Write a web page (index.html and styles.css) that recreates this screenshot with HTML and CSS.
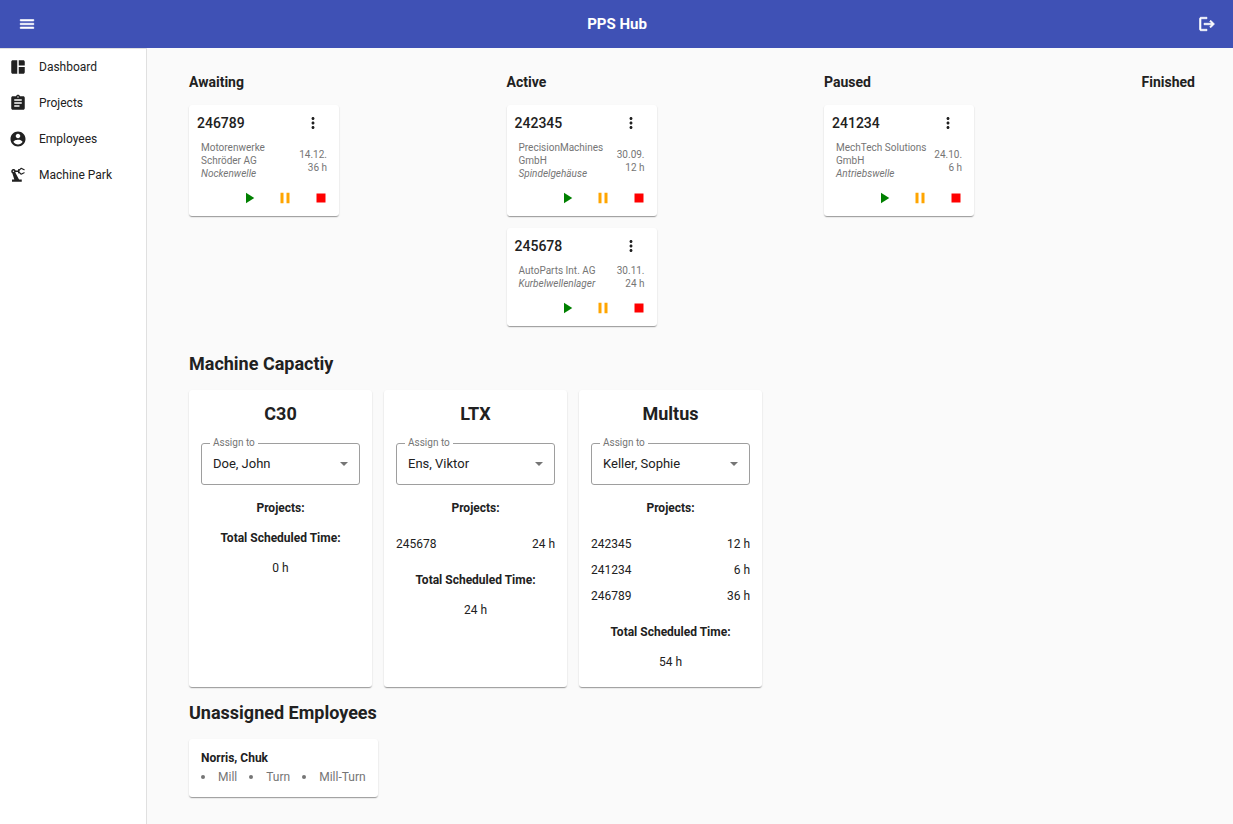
FILE: index.html
```html
<!DOCTYPE html>
<html lang="en">
<head>
<meta charset="utf-8">
<meta name="viewport" content="width=device-width, initial-scale=1">
<title>PPS Hub</title>
<link rel="stylesheet" href="styles.css">
</head>
<body>
<svg class="sprite" aria-hidden="true">
  <symbol id="more" viewBox="0 0 24 24"><path d="M12 8c1.100 0 2-.9 2-2s-.9-2-2-2-2 .9-2 2 .9 2 2 2zm0 2c-1.100 0-2 .9-2 2s.9 2 2 2 2-.9 2-2-.9-2-2-2zm0 6c-1.100 0-2 .9-2 2s.9 2 2 2 2-.9 2-2-.9-2-2-2z"/></symbol>
  <symbol id="play" viewBox="0 0 24 24"><path d="M8 5v14l11-7z"/></symbol>
  <symbol id="pause" viewBox="0 0 24 24"><path d="M6 19h4V5H6v14zm8-14v14h4V5h-4z"/></symbol>
  <symbol id="stop" viewBox="0 0 24 24"><path d="M6 6h12v12H6z"/></symbol>
</svg>
<header class="toolbar">
  <button class="icon-button" aria-label="Toggle menu"><svg class="icon" viewBox="0 0 24 24"><path d="M3 18h18v-2H3v2zm0-5h18v-2H3v2zm0-7v2h18V6H3z"/></svg></button>
  <h1 class="brand">PPS Hub</h1>
  <button class="icon-button" aria-label="Log out"><svg class="icon" viewBox="0 0 24 24"><path d="M17 7l-1.410 1.410L18.170 11H8v2h10.170l-2.580 2.580L17 17l5-5zM4 5h8V3H4c-1.100 0-2 .9-2 2v14c0 1.100.9 2 2 2h8v-2H4V5z"/></svg></button>
</header>
<div class="shell">
  <nav class="sidebar">
    <a class="nav-link" href="#dashboard"><svg class="icon" viewBox="0 0 24 24"><path d="M11 21H5c-1.100 0-2-.9-2-2V5c0-1.100.9-2 2-2h6v18zm2 0h6c1.100 0 2-.9 2-2v-7h-8v9zm8-11V5c0-1.100-.9-2-2-2h-6v7h8z"/></svg>Dashboard</a>
    <a class="nav-link" href="#projects"><svg class="icon" viewBox="0 0 24 24"><path d="M19 3h-4.180C14.400 1.840 13.300 1 12 1c-1.300 0-2.400.84-2.820 2H5c-1.100 0-2 .9-2 2v14c0 1.100.9 2 2 2h14c1.100 0 2-.9 2-2V5c0-1.100-.9-2-2-2zm-7 0c.55 0 1 .45 1 1s-.45 1-1 1-1-.45-1-1 .45-1 1-1zm2 14H7v-2h7v2zm3-4H7v-2h10v2zm0-4H7V7h10v2z"/></svg>Projects</a>
    <a class="nav-link" href="#employees"><svg class="icon" viewBox="0 0 24 24"><path d="M12 2C6.480 2 2 6.480 2 12s4.480 10 10 10 10-4.480 10-10S17.520 2 12 2zm0 3c1.660 0 3 1.340 3 3s-1.340 3-3 3-3-1.340-3-3 1.340-3 3-3zm0 14.200c-2.500 0-4.710-1.280-6-3.220.03-1.990 4-3.080 6-3.080 1.990 0 5.970 1.090 6 3.080-1.290 1.940-3.500 3.220-6 3.220z"/></svg>Employees</a>
    <a class="nav-link" href="#machines"><svg class="icon" viewBox="0 0 24 24"><path d="M19.930 8.350l-3.600 1.680L14 7.700V6.300l2.330-2.330 3.600 1.680c.38.18.82.01 1-.36.18-.38.01-.82-.36-1l-3.920-1.830c-.38-.18-.83-.1-1.130.2L13.780 4.300C13.600 4.120 13.320 4 13 4c-.55 0-1 .45-1 1v1H8.820C8.340 4.650 6.980 3.730 5.400 4.070c-1.160.25-2.150 1.250-2.360 2.430-.28 1.300.39 2.440 1.410 3.060L7.080 18H4v3h13v-3h-3.620L8.410 8.770c.17-.24.31-.49.41-.77H12v1c0 .55.45 1 1 1 .32 0 .6-.12.78-.3l1.650 1.650c.3.3.75.38 1.130.2l3.920-1.830c.38-.18.54-.62.36-1-.18-.37-.62-.54-1-.36zM6 8c-.55 0-1-.45-1-1s.45-1 1-1 1 .45 1 1-.45 1-1 1z"/></svg>Machine Park</a>
  </nav>
  <main class="content">
    <section class="board">
      <div class="lane">
        <h2 class="lane-title">Awaiting</h2>
        <article class="card job">
          <div class="job-head"><h3 class="job-id">246789</h3><button class="icon-button" aria-label="More"><svg class="icon"><use href="#more"/></svg></button></div>
          <div class="job-info"><div>Motorenwerke Schröder AG<br><em>Nockenwelle</em></div><div class="job-due">14.12.<br>36 h</div></div>
          <div class="job-actions"><button class="icon-button start" aria-label="Start"><svg class="icon"><use href="#play"/></svg></button><button class="icon-button hold" aria-label="Pause"><svg class="icon"><use href="#pause"/></svg></button><button class="icon-button halt" aria-label="Stop"><svg class="icon"><use href="#stop"/></svg></button></div>
        </article>
      </div>
      <div class="lane">
        <h2 class="lane-title">Active</h2>
        <article class="card job">
          <div class="job-head"><h3 class="job-id">242345</h3><button class="icon-button" aria-label="More"><svg class="icon"><use href="#more"/></svg></button></div>
          <div class="job-info"><div>PrecisionMachines GmbH<br><em>Spindelgehäuse</em></div><div class="job-due">30.09.<br>12 h</div></div>
          <div class="job-actions"><button class="icon-button start" aria-label="Start"><svg class="icon"><use href="#play"/></svg></button><button class="icon-button hold" aria-label="Pause"><svg class="icon"><use href="#pause"/></svg></button><button class="icon-button halt" aria-label="Stop"><svg class="icon"><use href="#stop"/></svg></button></div>
        </article>
        <article class="card job">
          <div class="job-head"><h3 class="job-id">245678</h3><button class="icon-button" aria-label="More"><svg class="icon"><use href="#more"/></svg></button></div>
          <div class="job-info"><div>AutoParts Int. AG<br><em>Kurbelwellenlager</em></div><div class="job-due">30.11.<br>24 h</div></div>
          <div class="job-actions"><button class="icon-button start" aria-label="Start"><svg class="icon"><use href="#play"/></svg></button><button class="icon-button hold" aria-label="Pause"><svg class="icon"><use href="#pause"/></svg></button><button class="icon-button halt" aria-label="Stop"><svg class="icon"><use href="#stop"/></svg></button></div>
        </article>
      </div>
      <div class="lane">
        <h2 class="lane-title">Paused</h2>
        <article class="card job">
          <div class="job-head"><h3 class="job-id">241234</h3><button class="icon-button" aria-label="More"><svg class="icon"><use href="#more"/></svg></button></div>
          <div class="job-info"><div>MechTech Solutions GmbH<br><em>Antriebswelle</em></div><div class="job-due">24.10.<br>6 h</div></div>
          <div class="job-actions"><button class="icon-button start" aria-label="Start"><svg class="icon"><use href="#play"/></svg></button><button class="icon-button hold" aria-label="Pause"><svg class="icon"><use href="#pause"/></svg></button><button class="icon-button halt" aria-label="Stop"><svg class="icon"><use href="#stop"/></svg></button></div>
        </article>
      </div>
      <div class="lane">
        <h2 class="lane-title">Finished</h2>
      </div>
    </section>
    <section>
      <h2 class="section-title">Machine Capactiy</h2>
      <div class="machines">
        <article class="card machine">
          <h3 class="machine-name">C30</h3>
          <div class="field"><label class="field-label" for="assign-c30">Assign to</label><select class="field-select" id="assign-c30"><option>Doe, John</option></select></div>
          <h4 class="caption">Projects:</h4>
          <h4 class="caption">Total Scheduled Time:</h4>
          <p class="total">0 h</p>
        </article>
        <article class="card machine">
          <h3 class="machine-name">LTX</h3>
          <div class="field"><label class="field-label" for="assign-ltx">Assign to</label><select class="field-select" id="assign-ltx"><option>Ens, Viktor</option></select></div>
          <h4 class="caption">Projects:</h4>
          <ul class="hours"><li><span>245678</span><span>24 h</span></li></ul>
          <h4 class="caption">Total Scheduled Time:</h4>
          <p class="total">24 h</p>
        </article>
        <article class="card machine">
          <h3 class="machine-name">Multus</h3>
          <div class="field"><label class="field-label" for="assign-multus">Assign to</label><select class="field-select" id="assign-multus"><option>Keller, Sophie</option></select></div>
          <h4 class="caption">Projects:</h4>
          <ul class="hours"><li><span>242345</span><span>12 h</span></li><li><span>241234</span><span>6 h</span></li><li><span>246789</span><span>36 h</span></li></ul>
          <h4 class="caption">Total Scheduled Time:</h4>
          <p class="total">54 h</p>
        </article>
      </div>
    </section>
    <section>
      <h2 class="section-title">Unassigned Employees</h2>
      <article class="card employee">
        <h3 class="employee-name">Norris, Chuk</h3>
        <ul class="skills"><li>Mill</li><li>Turn</li><li>Mill-Turn</li></ul>
      </article>
    </section>
  </main>
</div>
</body>
</html>
```
FILE: styles.css
```css
* {
  box-sizing: border-box;
}

body,
h1,
h2,
h3,
h4,
p,
ul {
  margin: 0;
  padding: 0;
}

body {
  display: flex;
  flex-direction: column;
  min-height: 100vh;
  background: #fafafa;
  color: #212121;
  font: 12px/18px Roboto, "Liberation Sans", sans-serif;
}

.sprite {
  display: none;
}

.icon {
  display: block;
  width: 18px;
  height: 18px;
  fill: currentColor;
}

.icon-button {
  display: flex;
  align-items: center;
  justify-content: center;
  width: 36px;
  height: 36px;
  padding: 0;
  border: 0;
  background: none;
  color: inherit;
  cursor: pointer;
}

.toolbar {
  display: flex;
  align-items: center;
  justify-content: space-between;
  height: 48px;
  padding: 0 8px 0 9px;
  background: #3f51b5;
  color: #fff;
}

.toolbar .icon {
  stroke: currentColor;
  stroke-width: 0.8;
}

.brand {
  font-size: 15px;
  font-weight: 700;
}

.shell {
  display: flex;
  flex: 1;
}

.sidebar {
  flex: none;
  width: 147px;
  border-top: 1px solid #e0e0e0;
  border-right: 1px solid #e0e0e0;
  background: #fff;
}

.nav-link {
  display: flex;
  align-items: center;
  gap: 12px;
  height: 36px;
  padding: 0 9px;
  color: inherit;
  text-decoration: none;
}

.content {
  flex: 1;
  padding: 24px 38px 24px 42px;
}

.board {
  display: flex;
  justify-content: space-between;
  padding-bottom: 12px;
}

.lane {
  display: flex;
  flex-direction: column;
  gap: 12px;
}

.lane-title {
  padding-bottom: 1px;
  font-size: 14px;
  line-height: 20px;
}

.card {
  border-radius: 3px;
  background: #fff;
  box-shadow: 0 2px 1px -1px rgba(0, 0, 0, 0.2), 0 1px 1px rgba(0, 0, 0, 0.14), 0 1px 2px rgba(0, 0, 0, 0.12);
}

.job {
  width: 150px;
}

.job-head {
  display: flex;
  align-items: center;
  justify-content: space-between;
  padding: 0 8px;
}

.job-id {
  font-size: 14px;
  font-weight: 500;
}

.job-info {
  display: flex;
  align-items: center;
  justify-content: space-between;
  padding: 0 12px;
  color: #757575;
  font-size: 10px;
  line-height: 13px;
}

.job-due {
  flex: none;
  text-align: right;
}

.job-actions {
  display: flex;
  justify-content: flex-end;
}

.start {
  color: green;
}

.hold {
  color: orange;
}

.halt {
  color: red;
}

.section-title {
  padding: 14px 0;
  font-size: 18px;
  line-height: 24px;
}

.machines {
  display: flex;
  gap: 12px;
}

.machine {
  width: 183px;
  padding: 12px 12px 16px;
  text-align: center;
}

.machine-name {
  font-size: 18px;
  line-height: 24px;
}

.field {
  position: relative;
  margin: 17px 0 14px;
}

.field-label {
  position: absolute;
  top: -6px;
  left: 9px;
  padding: 0 3px;
  background: #fff;
  color: #757575;
  font-size: 10px;
  line-height: 12px;
}

.field-select {
  display: block;
  width: 100%;
  height: 42px;
  padding: 0 30px 0 11px;
  border: 1px solid #9e9e9e;
  border-radius: 3px;
  appearance: none;
  background: #fff url("data:image/svg+xml,%3Csvg xmlns='http://www.w3.org/2000/svg' viewBox='0 0 8 4'%3E%3Cpath fill='%23757575' d='M0 0h8L4 4z'/%3E%3C/svg%3E") no-repeat right 11px center / 8px 4px;
  color: inherit;
  font: inherit;
  font-size: 13px;
}

.caption {
  margin-bottom: 12px;
  font-size: 12px;
}

.hours {
  padding: 2px 0 14px;
  list-style: none;
}

.hours li {
  display: flex;
  justify-content: space-between;
  line-height: 26px;
}

.employee {
  width: fit-content;
  padding: 10px 12px;
}

.employee-name {
  font-size: 12px;
}

.skills {
  display: flex;
  gap: 12px;
  color: #757575;
  line-height: 20px;
  list-style: none;
}

.skills li {
  display: flex;
  align-items: center;
  gap: 13px;
}

.skills li::before {
  width: 4px;
  height: 4px;
  border-radius: 50%;
  background: currentColor;
  content: "";
}
```
